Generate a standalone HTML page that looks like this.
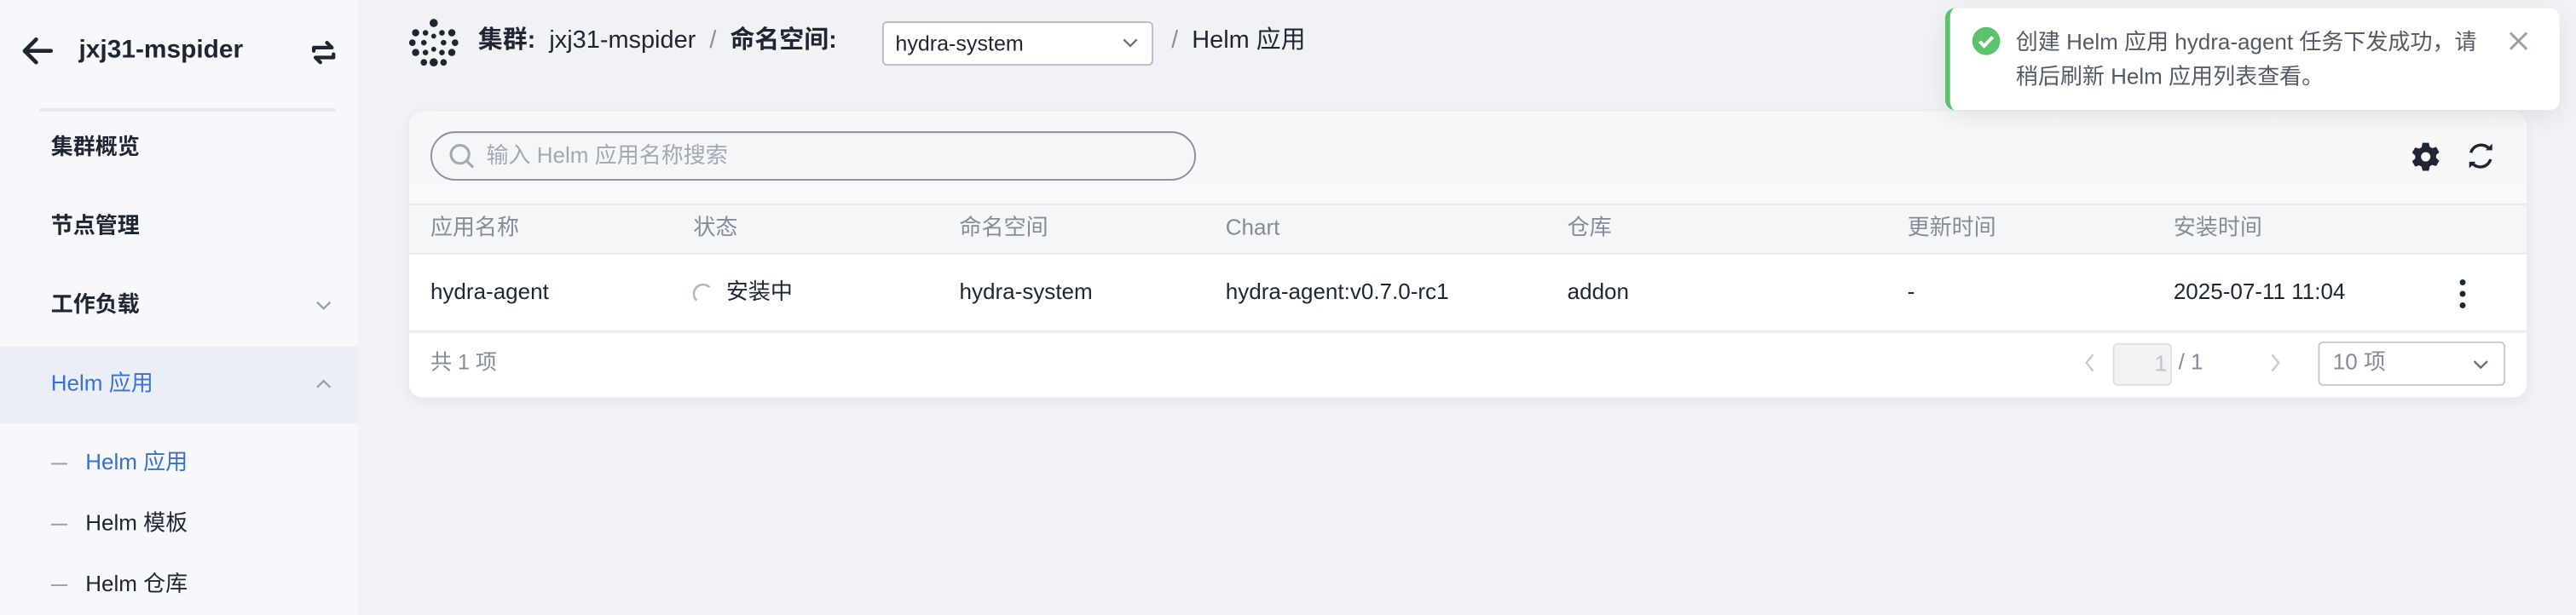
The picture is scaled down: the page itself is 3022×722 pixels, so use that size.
<!DOCTYPE html>
<html><head><meta charset="utf-8"><style>
*{box-sizing:border-box;margin:0;padding:0}
html,body{width:3022px;height:722px;overflow:hidden;background:#f1f2f6}
#r{width:1568px;height:375px;transform:scale(1.92730);transform-origin:0 0;position:relative;font-family:"Liberation Sans","Noto Sans CJK SC",sans-serif;font-size:13.5px;color:#1f2633}
.a{position:absolute;white-space:nowrap;line-height:18px}
.side{left:0;top:0;width:218px;height:375px;background:#f7f8fc}
.mi{left:31px;font-weight:bold;font-size:13.5px;color:#1f2633}
.th{top:62px;color:#868c96;font-size:13.5px}
.td{top:101px;color:#1f2633}
</style></head><body><div id="r">
<div class="a side"></div>
<svg class="a" style="left:13px;top:22px" width="20" height="18" viewBox="0 0 20 18"><path d="M18 9H3M9 2L2 9l7 7" fill="none" stroke="#1f2633" stroke-width="2.4" stroke-linecap="round" stroke-linejoin="round"/></svg>
<div class="a" style="left:48px;top:22px;font-size:15.5px;font-weight:bold">jxj31-mspider</div>
<svg class="a" style="left:188px;top:23px" width="18" height="18" viewBox="0 0 18 18"><path d="M3 8V6h11l-3-3M15 10v2H4l3 3" fill="none" stroke="#1f2633" stroke-width="2.2" stroke-linecap="round" stroke-linejoin="round"/></svg>
<div class="a" style="left:24px;top:66px;width:180px;height:2px;background:#e6e8ed"></div>
<div class="a mi" style="top:81px">集群概览</div>
<div class="a mi" style="top:129px">节点管理</div>
<div class="a mi" style="top:177px">工作负载</div>
<svg class="a" style="left:191px;top:181px" width="12" height="10"><path d="M2 3l4 4 4-4" fill="none" stroke="#9aa0aa" stroke-width="1.2"/></svg>
<div class="a" style="left:0;top:211px;width:218px;height:47px;background:#ebeef6"></div>
<div class="a mi" style="top:225px;color:#3a6fd8;font-weight:normal">Helm 应用</div>
<svg class="a" style="left:191px;top:229px" width="12" height="10"><path d="M2 7l4-4 4 4" fill="none" stroke="#9aa0aa" stroke-width="1.2"/></svg>
<div class="a" style="left:31px;top:282px;width:10px;height:1px;background:#9aa0aa"></div>
<div class="a" style="left:52px;top:273px;color:#3a6fd8">Helm 应用</div>
<div class="a" style="left:31px;top:319px;width:10px;height:1px;background:#9aa0aa"></div>
<div class="a" style="left:52px;top:310px">Helm 模板</div>
<div class="a" style="left:31px;top:356px;width:10px;height:1px;background:#9aa0aa"></div>
<div class="a" style="left:52px;top:347px">Helm 仓库</div>

<svg class="a" style="left:249px;top:11px" width="30" height="30" viewBox="0 0 30 30" fill="#1f2633"><circle cx="15" cy="3" r="2.5"/><circle cx="15" cy="27" r="2.5"/><circle cx="4" cy="9" r="2.2"/><circle cx="26" cy="9" r="2.2"/><circle cx="4" cy="21" r="2.2"/><circle cx="26" cy="21" r="2.2"/><circle cx="2" cy="15" r="2"/><circle cx="28" cy="15" r="2"/><circle cx="10" cy="9" r="1.7"/><circle cx="20" cy="9" r="1.7"/><circle cx="10" cy="21" r="1.7"/><circle cx="20" cy="21" r="1.7"/><circle cx="9" cy="15" r="1.7"/><circle cx="21" cy="15" r="1.7"/><circle cx="15" cy="11" r="1.5"/><circle cx="15" cy="19" r="1.5"/><circle cx="9" cy="27" r="2"/><circle cx="21" cy="27" r="2"/></svg>
<div class="a" style="left:291px;top:16px;font-size:15px"><b>集群:</b> &nbsp;jxj31-mspider &nbsp;<span style="color:#8a8f99">/</span>&nbsp; <b>命名空间:</b></div>
<div class="a" style="left:537px;top:13px;width:165px;height:27px;background:#fff;border:1px solid #b8bcc4;border-radius:3px;padding:4px 7px;font-size:13px">hydra-system</div>
<svg class="a" style="left:682px;top:21px" width="12" height="10"><path d="M2 3l4 4 4-4" fill="none" stroke="#6a707a" stroke-width="1.2"/></svg>
<div class="a" style="left:713px;top:16px;font-size:15px"><span style="color:#8a8f99">/</span>&nbsp; Helm 应用</div>

<div class="a" style="left:249px;top:68px;width:1289px;height:174px;background:#fff;border-radius:8px;box-shadow:0 2px 8px rgba(0,0,0,.06);overflow:hidden">
<div class="a" style="left:0;top:0;width:1289px;height:56px;background:linear-gradient(#f6f7f9,#f8f9fb)"></div>
<div class="a" style="left:13px;top:12px;width:466px;height:30px;border:1.5px solid #8a8f99;border-radius:15px;background:#f5f6f8"></div>
<svg class="a" style="left:24px;top:19px" width="16" height="17"><circle cx="7" cy="7" r="5.5" fill="none" stroke="#a3a8b1" stroke-width="1.6"/><path d="M11 11l4 4" stroke="#a3a8b1" stroke-width="1.6"/></svg>
<div class="a" style="left:47px;top:18px;color:#a3a8b1">输入 Helm 应用名称搜索</div>
<svg class="a" style="left:1218px;top:18px" width="19" height="19" viewBox="0 0 20 20"><path fill="#1f2633" d="M8 1h4l.6 2.6 1.6.9 2.5-.8 2 3.4-2 1.8v1.9l2 1.8-2 3.4-2.5-.8-1.6.9L12 19H8l-.6-2.6-1.6-.9-2.5.8-2-3.4 2-1.8V9.2l-2-1.8 2-3.4 2.5.8 1.6-.9z"/><circle cx="10" cy="10" r="3" fill="#f7f8fa"/></svg>
<svg class="a" style="left:1251px;top:17px" width="20" height="20" viewBox="0 0 20 20"><path d="M4 8a6.5 6.5 0 0 1 11.5-2M16 12a6.5 6.5 0 0 1-11.5 2" fill="none" stroke="#1f2633" stroke-width="1.8"/><path d="M13 6.5h4v-4zM7 13.5H3v4z" fill="#1f2633"/></svg>
<div class="a" style="left:0;top:56px;width:1289px;height:31px;background:#f5f6f8;border-top:1px solid #e6e8ed;border-bottom:1px solid #e6e8ed"></div>
<div class="a th" style="left:13px">应用名称</div>
<div class="a th" style="left:173px">状态</div>
<div class="a th" style="left:335px">命名空间</div>
<div class="a th" style="left:497px">Chart</div>
<div class="a th" style="left:705px">仓库</div>
<div class="a th" style="left:912px">更新时间</div>
<div class="a th" style="left:1074px">安装时间</div>
<div class="a td" style="left:13px">hydra-agent</div>
<svg class="a" style="left:172px;top:104px" width="13" height="13"><path d="M3 11A5 5 0 0 1 11 3" fill="none" stroke="#b0b4bb" stroke-width="1.3"/></svg>
<div class="a td" style="left:193px">安装中</div>
<div class="a td" style="left:335px">hydra-system</div>
<div class="a td" style="left:497px">hydra-agent:v0.7.0-rc1</div>
<div class="a td" style="left:705px">addon</div>
<div class="a td" style="left:912px">-</div>
<div class="a td" style="left:1074px">2025-07-11 11:04</div>
<svg class="a" style="left:1246px;top:101px" width="8" height="20" fill="#1f2633"><circle cx="4" cy="3" r="1.8"/><circle cx="4" cy="10" r="1.8"/><circle cx="4" cy="17" r="1.8"/></svg>
<div class="a" style="left:0;top:133px;width:1289px;height:1.5px;background:#eceef2"></div>
<div class="a" style="left:13px;top:144px;color:#868c96;font-size:13px">共 1 项</div>
<svg class="a" style="left:1018px;top:146px" width="10" height="14"><path d="M7 2L3 7l4 5" fill="none" stroke="#c6c9ce" stroke-width="1.2"/></svg>
<div class="a" style="left:1037px;top:141px;width:36px;height:26px;background:#f1f2f4;border:1px solid #dcdfe4;border-radius:3px;text-align:right;padding:3px 2px;color:#c0c3c8">1</div>
<div class="a" style="left:1077px;top:144px;color:#868c96">/ 1</div>
<svg class="a" style="left:1131px;top:146px" width="10" height="14"><path d="M3 2l4 5-4 5" fill="none" stroke="#c6c9ce" stroke-width="1.2"/></svg>
<div class="a" style="left:1162px;top:140px;width:114px;height:27px;border:1px solid #c6c9ce;border-radius:3px;padding:3px 8px;color:#868c96">10 项</div>
<svg class="a" style="left:1255px;top:149px" width="12" height="10"><path d="M2 3l4 4 4-4" fill="none" stroke="#6a707a" stroke-width="1.2"/></svg>
</div>

<div class="a" style="left:1184px;top:5px;width:374px;height:62px;background:#fff;border-radius:6px;border-left:3px solid #5cc26b;box-shadow:0 4px 14px rgba(0,0,0,.08)"></div>
<svg class="a" style="left:1200px;top:16px" width="18" height="18"><circle cx="9" cy="9" r="8.5" fill="#5cc26b"/><path d="M5 9.3l2.7 2.7L13 6.5" fill="none" stroke="#fff" stroke-width="2"/></svg>
<div class="a" style="left:1227px;top:15px;color:#555b66;line-height:21px">创建 Helm 应用 hydra-agent 任务下发成功，请<br>稍后刷新 Helm 应用列表查看。</div>
<svg class="a" style="left:1527px;top:19px" width="12" height="12"><path d="M1 1l10 10M11 1L1 11" stroke="#9aa0aa" stroke-width="1.5"/></svg>
</div></body></html>
